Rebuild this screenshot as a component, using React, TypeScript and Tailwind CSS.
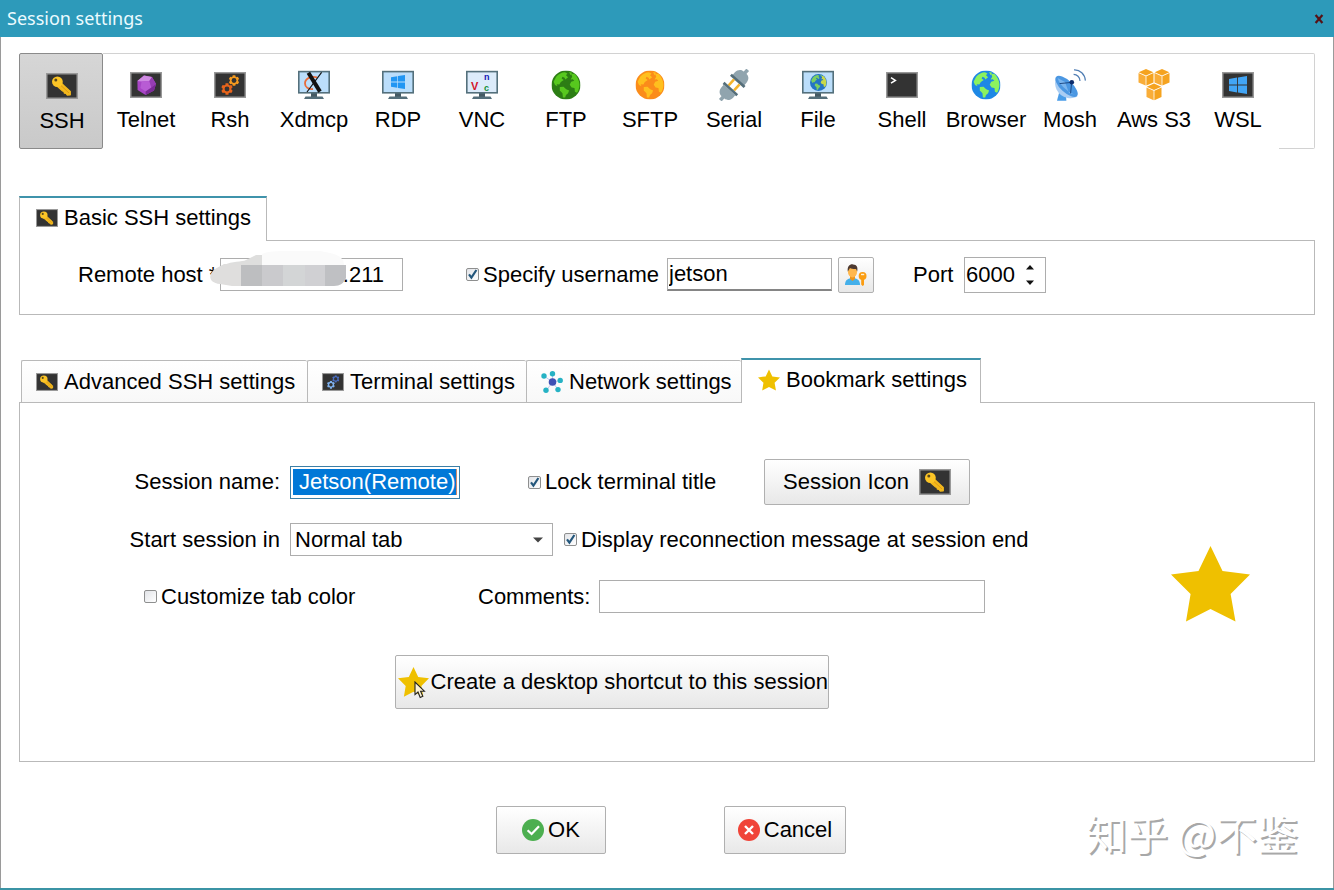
import { useState } from 'react';
import type { ReactNode } from 'react';
import { clsx } from 'clsx';
import { FaCog } from 'react-icons/fa';

/* ---------- icons ---------- */

interface IconProps {
  className?: string;
}

function Screen({ className, children }: IconProps & { children?: ReactNode }) {
  return (
    <svg viewBox="0 0 32 26" className={clsx('shrink-0', className)} aria-hidden="true">
      <rect x="0.75" y="0.75" width="30.5" height="24.5" fill="#333333" stroke="#989898" strokeWidth="1.5" />
      {children}
    </svg>
  );
}

function KeyScreen({ className }: IconProps) {
  return (
    <Screen className={className}>
      <path
        d="M15 10 L24.2 18.6 L24.2 21.8 L21.2 22 L20.2 20.4 L18.4 20 L18 18.4 L16.4 17.8 L11 13 Z"
        fill="#f4b91d"
        stroke="#f4b91d"
        strokeWidth="1.4"
        strokeLinejoin="round"
      />
      <path d="M14.4 12 L23 20" stroke="#d68f10" strokeWidth="0.8" />
      <ellipse cx="11.4" cy="8.8" rx="5.4" ry="5.2" fill="#fcc526" />
      <circle cx="9.8" cy="7" r="1.5" fill="#5c4a1c" />
    </Screen>
  );
}

function GemScreen({ className }: IconProps) {
  return (
    <Screen className={className}>
      <path d="M14 3.4 L22 5 L26 12 L24 18.4 L15.6 23 L7.6 18 L7.4 9 Z" fill="#a845c6" />
      <path d="M14 3.4 L22 5 L19.4 9 L11.6 9.6 L7.4 9 Z" fill="#cf8be2" />
      <path d="M11.6 9.6 L19.4 9 L21.4 15.4 L15.6 19.6 L10.4 16 Z" fill="#b85cd4" />
      <path d="M22 5 L26 12 L21.4 15.4 L19.4 9 Z" fill="#963db4" />
      <path d="M24 18.4 L15.6 23 L15.6 19.6 L21.4 15.4 L26 12 Z" fill="#7b2a97" />
    </Screen>
  );
}

function GearsScreen({ className, front, back }: IconProps & { front: string; back: string }) {
  return (
    <Screen className={className}>
      <FaCog x="14.5" y="3" size={11} color={back} />
      <FaCog x="7" y="11" size={12} color={front} />
      <circle cx="20" cy="8.5" r="2.4" fill="#333333" />
      <circle cx="13" cy="17" r="2.4" fill="#333333" />
    </Screen>
  );
}

function Monitor({ screen, children }: { screen: string; children?: ReactNode }) {
  return (
    <svg viewBox="0 0 34 32" className="h-8 w-[34px]" aria-hidden="true">
      <rect x="14" y="24" width="6" height="4" fill="#455a64" />
      <path d="M8.5 27.6 H25.5 L27 30 H7 Z" fill="#546e7a" />
      <rect x="1.8" y="2.6" width="30.4" height="21.2" fill={screen} stroke="#54707c" strokeWidth="1.6" />
      {children}
    </svg>
  );
}

function WindowsMark({ x, y, size, color }: { x: number; y: number; size: number; color: string }) {
  return (
    <svg x={x} y={y} width={size} height={size} viewBox="0 0 20 20">
      <path d="M0 3.2 L9 1.8 V9.4 H0 Z M10 1.6 L20 0 V9.4 H10 Z M0 10.6 H9 V18.2 L0 16.8 Z M10 10.6 H20 V20 L10 18.4 Z" fill={color} />
    </svg>
  );
}

function Globe({ x, y, size, sea, land, far }: { x: number; y: number; size: number; sea: string; land: string; far?: string }) {
  return (
    <svg x={x} y={y} width={size} height={size} viewBox="0 0 28 28">
      <circle cx="14" cy="14" r="14" fill={sea} />
      <path
        d="M4.5 6 C7 3 10 1.8 13 1.6 L15.4 3 L14 4.6 L16 6.4 L13.4 8.6 L12.6 7 L10.6 6 L9.8 7.8 L11.8 9.2 L9 11 L7.6 13.6 L5 13.2 L5.8 15.2 L3.4 14 L2 10.8 Z"
        fill={land}
      />
      <path d="M8 16 L11.6 15.6 L14.2 18 L17 19.4 L16 22 L14 23.6 L13.2 26 L11 26 L10.6 22 L8 19.4 Z" fill={land} />
      <path
        d="M19 3.4 L22 3.2 C25 6 26.8 9.6 27 13.4 C27 16.4 26 19.6 24.6 21.4 L22.6 20.6 L22.2 17 L19.4 16.4 L17.6 13.8 L19 10.8 L22 9.8 L20.6 8.4 L18.4 8.8 L20 6 Z"
        fill={far ?? land}
      />
      <path d="M17 1.4 L20 2.2 L18.4 4.6 Z" fill={land} />
    </svg>
  );
}

function GlobeIcon({ sea, land }: { sea: string; land: string }) {
  return (
    <svg viewBox="0 0 34 32" className="h-8 w-[34px]" aria-hidden="true">
      <Globe x={2.5} y={1.5} size={29} sea={sea} land={land} />
    </svg>
  );
}

function PlugIcon() {
  return (
    <svg viewBox="0 0 34 32" className="h-8 w-[34px]" aria-hidden="true">
      <g transform="translate(17 16) rotate(42)">
        <path d="M-1.8 -20.5 H1.8 V-15.5 H-1.8 Z" fill="#90a4ae" />
        <path d="M-7.8 -6.5 V-10 C-7.8 -14 -5 -16.5 -2.4 -16.5 H2.4 C5 -16.5 7.8 -14 7.8 -10 V-6.5 Z" fill="#90a4ae" />
        <rect x="-9.2" y="-7" width="18.4" height="2.8" fill="#546e7a" />
        <rect x="-5" y="-4.2" width="2.6" height="8.2" fill="#f6b42c" />
        <rect x="2.4" y="-4.2" width="2.6" height="8.2" fill="#f6b42c" />
        <rect x="-9.2" y="4" width="18.4" height="2.8" fill="#546e7a" />
        <path d="M-7.8 6.5 V10 C-7.8 14 -5 16.5 -2.4 16.5 H2.4 C5 16.5 7.8 14 7.8 10 V6.5 Z" fill="#90a4ae" />
        <path d="M-1.8 15.5 H1.8 V20.5 H-1.8 Z" fill="#90a4ae" />
      </g>
    </svg>
  );
}

function DishIcon() {
  return (
    <svg viewBox="0 0 34 32" className="h-8 w-[34px]" aria-hidden="true">
      <path d="M6 24 L13 26 L13.4 31.8 H4 Z" fill="#4a9de8" />
      <path d="M3 8 C0 16 4 27 14.5 29 C19 29.6 23 28.8 24.6 27 Z" fill="#a9cdf3" />
      <ellipse cx="13.6" cy="17.4" rx="14.2" ry="6" transform="rotate(43 13.6 17.4)" fill="#4b97e2" />
      <path d="M4.6 9 L12 13 L16 24 L23 26 C18 24.6 7 18 4.6 9 Z" fill="#7ab5ee" />
      <path d="M18.6 13.4 L6.6 14.6 M18.6 13.4 L17.6 24.4" stroke="#16407a" strokeWidth="0.9" />
      <circle cx="18.8" cy="13.2" r="2.3" fill="#0d2c6c" />
      <path d="M20.6 5.4 C24 5.4 27 8.2 27 12 M21 0.8 C27 0.4 32 5.4 32.4 11.6" fill="none" stroke="#4f7db3" strokeWidth="1.2" />
    </svg>
  );
}

function Cube({ x, y }: { x: number; y: number }) {
  return (
    <g transform={`translate(${x} ${y})`}>
      <path d="M7.5 0 L14.8 3.2 L7.5 6.5 L0.2 3.2 Z" fill="#f5a31f" />
      <path d="M0 4 L7.1 7.2 V16.6 L0 13.4 Z" fill="#f9ad38" />
      <path d="M15 4 L7.9 7.2 V16.6 L15 13.4 Z" fill="#f5a31f" />
    </g>
  );
}

function CubesIcon() {
  return (
    <svg viewBox="0 0 34 32" className="h-8 w-[34px]" aria-hidden="true">
      <Cube x={1.5} y={0} />
      <Cube x={17.5} y={0} />
      <Cube x={9.5} y={14.6} />
    </svg>
  );
}

function StarIcon({ className }: IconProps) {
  return (
    <svg viewBox="0 0 79 76" className={clsx('shrink-0', className)} aria-hidden="true">
      <path d="M39.5 0 L51.5 25 L79 28.6 L59.6 48 L64.5 75.5 L39.5 63 L15 75.5 L19.6 48 L0 28.6 L27.5 25 Z" fill="#efc000" />
    </svg>
  );
}

function NetworkIcon({ className }: IconProps) {
  return (
    <svg viewBox="0 0 22 22" className={clsx('shrink-0', className)} aria-hidden="true">
      <path d="M11.5 11 L3 5 M11.5 11 L11.5 3 M11.5 11 L19 9.5 M11.5 11 L17 18.5 M11.5 11 L5 20" stroke="#b9c3ee" strokeWidth="0.9" />
      <g fill="#26b2c4">
        <circle cx="3" cy="5" r="2.7" />
        <circle cx="11.5" cy="2.8" r="2.7" />
        <circle cx="19.2" cy="9.4" r="2.7" />
        <circle cx="17" cy="18.6" r="2.7" />
        <circle cx="5" cy="19.2" r="2.7" />
      </g>
      <circle cx="11.5" cy="11" r="3.8" fill="#3f51b5" />
    </svg>
  );
}

function UserKeyIcon() {
  return (
    <svg viewBox="0 0 24 24" className="h-6 w-6" aria-hidden="true">
      <path d="M1 22 C1 17 4 15 8.5 15 C13 15 16 17 16 22 Z" fill="#45b0ea" />
      <path d="M6 13 H11 V16 L8.5 18 L6 16 Z" fill="#ee9419" />
      <ellipse cx="8.5" cy="8.5" rx="4.6" ry="6" fill="#ffb74d" />
      <path d="M3.8 8.6 C3 3 6 1 9 1.4 C13 1.6 14 4 13.2 8.6 L12 6 C10 6.2 7 5.6 6 5 Z" fill="#4e3a31" />
      <circle cx="18.6" cy="13" r="3.9" fill="#fb9d12" />
      <path d="M17.2 15 H20 V22 L18.6 23 L17.2 21.6 Z" fill="#fb9d12" />
      <rect x="17" y="10.8" width="3.2" height="1.4" fill="#fff0d4" />
    </svg>
  );
}

function OkIcon() {
  return (
    <svg viewBox="0 0 22 22" className="h-[22px] w-[22px]" aria-hidden="true">
      <circle cx="11" cy="11" r="11" fill="#4caf50" />
      <path d="M5.6 11.2 L9.6 15 L17 7.2" fill="none" stroke="#ffffff" strokeWidth="2.2" />
    </svg>
  );
}

function CancelIcon() {
  return (
    <svg viewBox="0 0 22 22" className="h-[22px] w-[22px]" aria-hidden="true">
      <circle cx="11" cy="11" r="11" fill="#f04438" />
      <path d="M7 7 L15 15 M15 7 L7 15" stroke="#ffffff" strokeWidth="2.4" />
    </svg>
  );
}

/* ---------- controls ---------- */

function CheckField({ label, defaultChecked, className }: { label: string; defaultChecked?: boolean; className?: string }) {
  return (
    <label className={clsx('flex items-center gap-1 whitespace-nowrap', className)}>
      <span className="grid shrink-0">
        <input
          type="checkbox"
          defaultChecked={defaultChecked}
          className="peer col-start-1 row-start-1 h-[13px] w-[13px] appearance-none rounded-xs border border-[#8e8f8f] bg-linear-to-br from-[#e2e4e8] to-white"
        />
        <svg viewBox="0 0 13 13" className="pointer-events-none invisible col-start-1 row-start-1 h-[13px] w-[13px] peer-checked:visible" aria-hidden="true">
          <path d="M3 6.4 L5.4 9.6 L10.4 2" fill="none" stroke="#24577c" strokeWidth="2.2" />
        </svg>
      </span>
      {label}
    </label>
  );
}

interface TabProps {
  label: string;
  icon: ReactNode;
  active?: boolean;
  className?: string;
  onClick?: () => void;
}

function Tab({ label, icon, active, className, onClick }: TabProps) {
  return (
    <button
      type="button"
      role="tab"
      aria-selected={active}
      onClick={onClick}
      className={clsx(
        'flex items-center gap-1.5 border-[#b9b9b9] whitespace-nowrap',
        active
          ? 'relative -mb-px h-[45px] border-x border-t-2 border-t-[#3f93ab] bg-white pb-1 pl-4'
          : 'h-[42px] rounded-t-xs border-t border-l bg-linear-to-b from-white to-[#f8f8f8] pl-3.5',
        className,
      )}
    >
      {icon}
      {label}
    </button>
  );
}

const pushButton =
  'flex items-center rounded-xs border border-[#b0b0b0] bg-linear-to-b from-white to-[#e8e8e8] whitespace-nowrap';

const field = 'h-[33px] rounded-none border border-[#adadad] bg-white outline-none';

/* ---------- data ---------- */

const sessionTypes = [
  { name: 'SSH', icon: <KeyScreen className="my-[3px] h-[26px] w-8" /> },
  { name: 'Telnet', icon: <GemScreen className="my-[3px] h-[26px] w-8" /> },
  { name: 'Rsh', icon: <GearsScreen className="my-[3px] h-[26px] w-8" front="#e8641b" back="#f59a1f" /> },
  {
    name: 'Xdmcp',
    icon: (
      <Monitor screen="#bbdefb">
        <path d="M20 8.4 C14 6.6 8 9.6 8 14.4 C8 18 11.4 20.4 16 20" fill="none" stroke="#e86b3a" strokeWidth="1.8" />
        <path d="M24.6 3.4 L10 23" stroke="#111111" strokeWidth="1.2" />
        <path d="M11.4 3.8 L23 22.6" stroke="#111111" strokeWidth="4" />
      </Monitor>
    ),
  },
  {
    name: 'RDP',
    icon: (
      <Monitor screen="#bbdefb">
        <WindowsMark x={10} y={6} size={14} color="#2196f3" />
      </Monitor>
    ),
  },
  {
    name: 'VNC',
    icon: (
      <Monitor screen="#dcebfa">
        <text x="6" y="21" fontSize="11" fontWeight="bold" fill="#d3122a">V</text>
        <text x="19" y="10.5" fontSize="9" fontWeight="bold" fill="#1414b4">n</text>
        <text x="19" y="21.5" fontSize="9" fontWeight="bold" fill="#149038">c</text>
      </Monitor>
    ),
  },
  { name: 'FTP', icon: <GlobeIcon sea="#2c7d14" land="#57c81e" /> },
  { name: 'SFTP', icon: <GlobeIcon sea="#fb8c1a" land="#ffc01e" /> },
  { name: 'Serial', icon: <PlugIcon /> },
  {
    name: 'File',
    icon: (
      <Monitor screen="#bbdefb">
        <Globe x={9} y={5} size={17} sea="#2474c4" land="#7ccf62" far="#c8d84a" />
      </Monitor>
    ),
  },
  {
    name: 'Shell',
    icon: (
      <Screen className="my-[3px] h-[26px] w-8">
        <path d="M5 5.6 L9.4 8.4 L5 11.2" fill="none" stroke="#ffffff" strokeWidth="1.5" />
      </Screen>
    ),
  },
  { name: 'Browser', icon: <GlobeIcon sea="#1e88e5" land="#8cf25e" /> },
  { name: 'Mosh', icon: <DishIcon /> },
  { name: 'Aws S3', icon: <CubesIcon /> },
  {
    name: 'WSL',
    icon: (
      <Screen className="my-[3px] h-[26px] w-8">
        <WindowsMark x={7} y={4} size={18} color="#42a5f5" />
      </Screen>
    ),
  },
];

const settingsTabs = [
  { name: 'Advanced SSH settings', width: 'w-[286px]', icon: <KeyScreen className="h-[18px] w-[22px]" /> },
  {
    name: 'Terminal settings',
    width: 'w-[219px]',
    icon: <GearsScreen className="h-[18px] w-[22px]" front="#7fb2f0" back="#4a6fc4" />,
  },
  { name: 'Network settings', width: 'w-[215px]', icon: <NetworkIcon className="h-[22px] w-[22px]" /> },
  { name: 'Bookmark settings', width: 'w-[240px]', icon: <StarIcon className="h-[22px] w-[22px]" /> },
];

/* ---------- sections ---------- */

function SessionTypeBar() {
  const [selected, setSelected] = useState('SSH');

  return (
    <nav className="flex h-24">
      {sessionTypes.map((type) => (
        <button
          key={type.name}
          type="button"
          aria-pressed={type.name === selected}
          onClick={() => setSelected(type.name)}
          className={clsx(
            'flex w-[84px] shrink-0 flex-col items-center gap-[5px] pl-0.5 whitespace-nowrap',
            type.name === selected
              ? 'rounded-xs border border-[#8a8a8a] bg-linear-to-b from-[#d6d6d6] to-[#c9c9c9] pt-4'
              : 'border-t border-[#d2d2d2] pt-[15px]',
          )}
        >
          {type.icon}
          <span className="leading-7">{type.name}</span>
        </button>
      ))}
      <div className="flex-1 rounded-r-xs border-y border-r border-[#d2d2d2]" />
    </nav>
  );
}

function BasicSettings() {
  const [port, setPort] = useState(6000);

  return (
    <section className="mt-[47px]">
      <div role="tablist" className="flex h-11 items-start">
        <Tab label="Basic SSH settings" icon={<KeyScreen className="h-[18px] w-[22px]" />} active className="w-[248px]" />
      </div>
      <div className="flex h-[75px] items-center border border-[#b9b9b9] pb-1.5 pl-[58px]">
        <div className="relative flex w-[325px] items-center">
          <label htmlFor="host" className="w-[142px] whitespace-nowrap">Remote host *</label>
          <input id="host" type="text" defaultValue=".211" className={clsx(field, 'w-[183px] pr-[18px] text-right')} />
          {/* pixelated mask over the first octets */}
          <svg viewBox="0 0 140 38" className="pointer-events-none absolute -top-2 left-[132px] h-[38px] w-[140px]" aria-hidden="true">
            <path d="M52 4 C58 1 68 1 76 1 H110 C122 3 134 5 134 15 H52 Z" fill="#fafafa" />
            <path d="M14 15 C22 11 32 12 36 10 L46 5 H52 V15 Z" fill="#dededd" />
            <path d="M14 14 H32 V36 H22 L10 34 C-2 33 -2 24 5 19 Z" fill="#dfdedd" />
            <rect x="31" y="15" width="21" height="21" fill="#bdbec0" />
            <rect x="52" y="15" width="21" height="21" fill="#cacacd" />
            <rect x="73" y="15" width="22" height="21" fill="#d3d5d6" />
            <rect x="95" y="15" width="20" height="21" fill="#d0d0d3" />
            <path d="M115 15 H136 V28 C134 33 130 36 124 36 H115 Z" fill="#bfc0c3" />
          </svg>
        </div>
        <CheckField label="Specify username" defaultChecked className="ml-[63px] w-[201px]" />
        <input type="text" aria-label="Username" defaultValue="jetson" className={clsx(field, 'w-[165px] border-b-2 border-b-[#858585] pl-px')} />
        <button type="button" aria-label="Manage users" className={clsx(pushButton, 'ml-1.5 h-9 w-9 justify-center')}>
          <UserKeyIcon />
        </button>
        <label htmlFor="port" className="ml-[39px] w-[51px]">Port</label>
        <div className="flex h-9 w-[82px] items-center border border-[#adadad]">
          <input
            id="port"
            type="text"
            value={port}
            onChange={(e) => setPort(Number(e.target.value) || 0)}
            className="w-[60px] pl-px outline-none"
          />
          <div className="flex flex-col gap-2">
            <button type="button" aria-label="Increase port" onClick={() => setPort(port + 1)}>
              <svg viewBox="0 0 10 8" className="h-2 w-2.5" aria-hidden="true">
                <path d="M1 6.5 L5 2 L9 6.5 Z" fill="#111111" />
              </svg>
            </button>
            <button type="button" aria-label="Decrease port" onClick={() => setPort(port - 1)}>
              <svg viewBox="0 0 10 8" className="h-2 w-2.5" aria-hidden="true">
                <path d="M1 1.5 L5 6 L9 1.5 Z" fill="#111111" />
              </svg>
            </button>
          </div>
        </div>
      </div>
    </section>
  );
}

function BookmarkForm() {
  return (
    <form className="flex flex-col" onSubmit={(e) => e.preventDefault()}>
      <div className="flex h-[46px] items-center">
        <label htmlFor="session-name" className="mr-2.5 w-[260px] text-right">Session name:</label>
        <div className="h-[33px] w-[170px] border border-[#3c7fa6] p-0.5">
          <input
            id="session-name"
            type="text"
            defaultValue="Jetson(Remote)"
            className="block h-[26px] w-full border-r border-[#d08a6c] bg-[#0078d7] pl-1.5 text-white outline-none"
          />
        </div>
        <CheckField label="Lock terminal title" defaultChecked className="ml-[68px] w-[236px]" />
        <button type="button" className={clsx(pushButton, 'h-[46px] w-[206px] justify-center gap-2.5')}>
          Session Icon
          <KeyScreen className="h-[26px] w-8" />
        </button>
      </div>

      <div className="mt-[18px] flex items-center">
        <label htmlFor="start-in" className="mr-2.5 w-[260px] text-right">Start session in</label>
        <div className="relative w-[263px]">
          <select id="start-in" className={clsx(field, 'block w-full appearance-none pl-1')}>
            <option>Normal tab</option>
            <option>Detached tab</option>
          </select>
          <svg viewBox="0 0 10 6" className="pointer-events-none absolute top-3.5 right-2.5 h-1.5 w-2.5" aria-hidden="true">
            <path d="M0 0.5 H10 L5 5.5 Z" fill="#444444" />
          </svg>
        </div>
        <CheckField label="Display reconnection message at session end" defaultChecked className="ml-[11px]" />
      </div>

      <div className="mt-6 flex items-center">
        <CheckField label="Customize tab color" className="ml-[124px] w-[334px]" />
        <label htmlFor="comments" className="w-[121px]">Comments:</label>
        <input id="comments" type="text" className={clsx(field, 'w-[386px] px-1')} />
      </div>

      <button type="button" className={clsx(pushButton, 'mt-[42px] ml-[375px] h-[54px] w-[434px] justify-end gap-0.5')}>
        <span className="relative">
          <StarIcon className="h-[30px] w-[31px]" />
          <svg viewBox="0 0 12 18" className="absolute top-3.5 left-4 h-[18px] w-3" aria-hidden="true">
            <path d="M1 1 V13.6 L4 11 L6.2 16.4 L8.8 15.2 L6.6 10.2 H10.4 Z" fill="#fdf3d6" stroke="#222222" strokeWidth="1.1" />
          </svg>
        </span>
        Create a desktop shortcut to this session
      </button>
    </form>
  );
}

function SessionSettings() {
  const [activeTab, setActiveTab] = useState('Bookmark settings');

  return (
    <section className="mt-[43px]">
      <div role="tablist" className="flex h-11 items-end pl-0.5">
        {settingsTabs.map((tab) => (
          <Tab
            key={tab.name}
            label={tab.name}
            icon={tab.icon}
            active={tab.name === activeTab}
            className={tab.width}
            onClick={() => setActiveTab(tab.name)}
          />
        ))}
      </div>
      <div className="flex items-center justify-between border border-[#b9b9b9] pt-14 pr-16 pb-[52px]">
        <BookmarkForm />
        <StarIcon className="h-[76px] w-[79px]" />
      </div>
    </section>
  );
}

export default function App() {
  return (
    <div className="relative flex min-h-screen flex-col border-b-2 border-[#3b94a5] bg-white font-['Liberation_Sans',Arial,sans-serif] text-[22px] leading-7 text-black">
      <header className="flex h-[37px] items-center justify-between bg-[#2d9aba] pr-2.5 pl-[7px]">
        <h1 className="pb-0.5 font-['Noto_Sans',sans-serif] text-lg text-[#ebfbff]">Session settings</h1>
        <button type="button" aria-label="Close" className="text-[#561216]">
          <svg viewBox="0 0 10 10" className="h-2.5 w-2.5" aria-hidden="true">
            <path d="M1.6 1 L8.4 9 M8.4 1 L1.6 9" stroke="currentColor" strokeWidth="2.2" />
          </svg>
        </button>
      </header>

      <main className="flex-1 border-x border-[#9a9a9a] px-[18px] pt-4">
        <SessionTypeBar />
        <BasicSettings />
        <SessionSettings />
        <footer className="flex justify-center gap-[118px] pt-11 pb-[34px] pl-2">
          <button type="button" className={clsx(pushButton, 'h-12 w-[110px] justify-center gap-1')}>
            <OkIcon />
            OK
          </button>
          <button type="button" className={clsx(pushButton, 'h-12 w-[122px] justify-center gap-1')}>
            <CancelIcon />
            Cancel
          </button>
        </footer>
      </main>

      <p className="pointer-events-none absolute right-9 bottom-7 font-['Noto_Sans_CJK_SC',sans-serif] text-[41px] leading-[56px] text-white [text-shadow:2px_2px_0_#a8a8a8]">
        知乎 @不鉴
      </p>
    </div>
  );
}
